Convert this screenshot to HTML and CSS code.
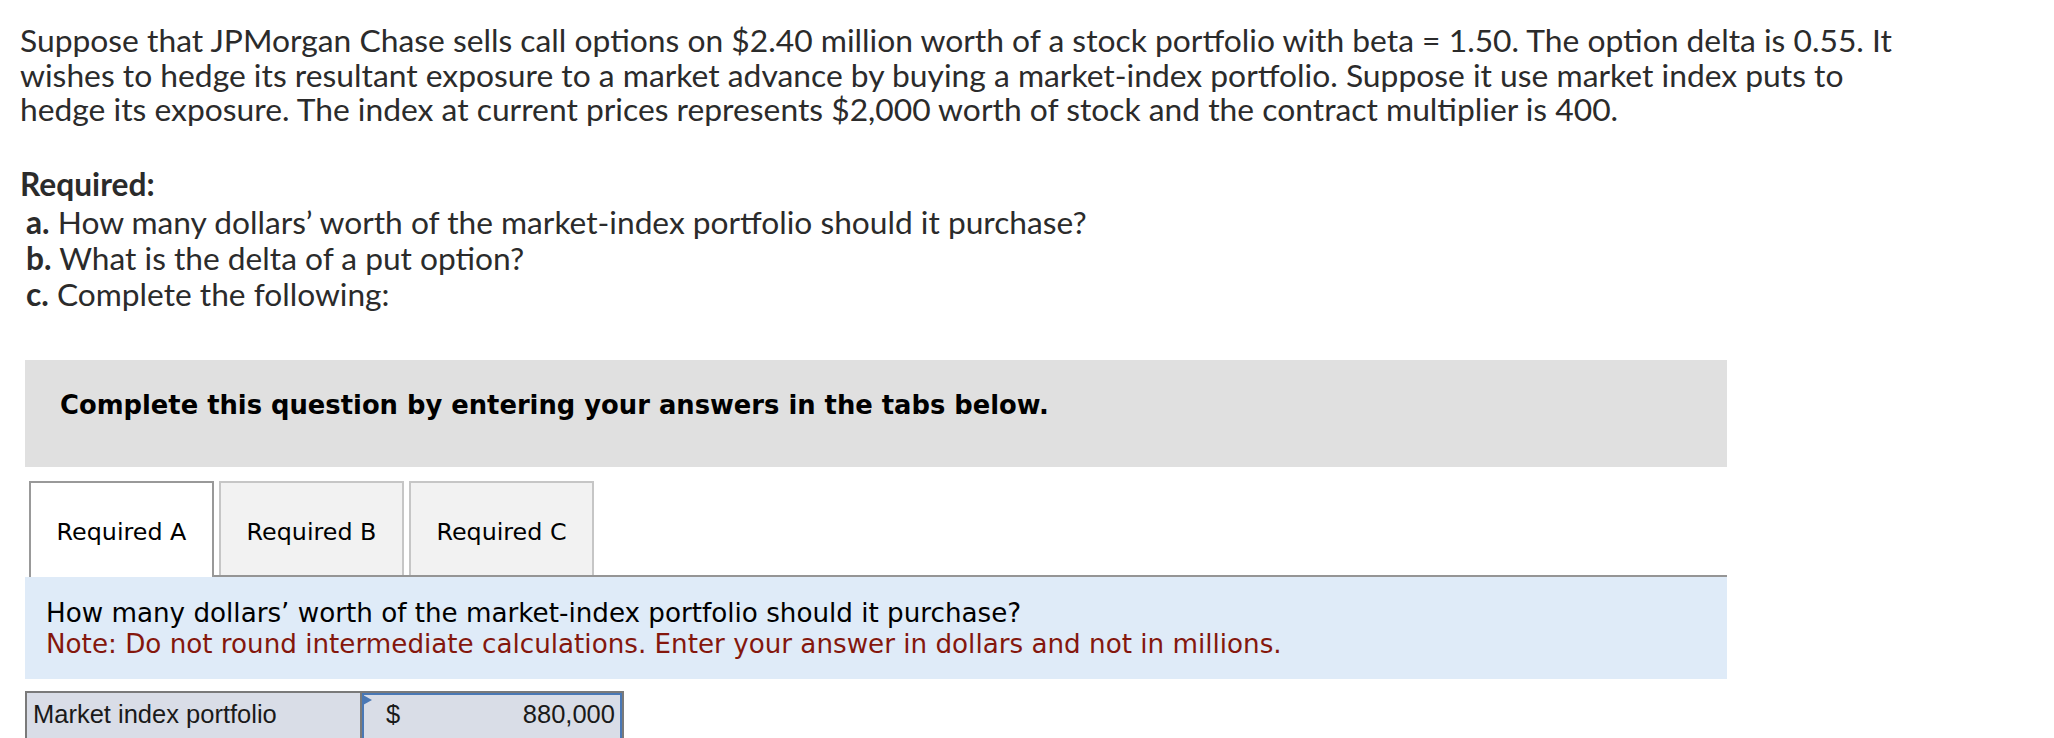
FILE: index.html
```html
<!DOCTYPE html>
<html lang="en">
<head>
<meta charset="utf-8">
<title>Question</title>
<link rel="stylesheet" href="styles.css">
</head>
<body>
<main class="page">
  <p class="prompt">Suppose that JPMorgan Chase sells call options on $2.40 million worth of a stock portfolio with beta = 1.50. The option delta is 0.55. It<br>wishes to hedge its resultant exposure to a market advance by buying a market-index portfolio. Suppose it use market index puts to<br>hedge its exposure. The index at current prices represents $2,000 worth of stock and the contract multiplier is 400.</p>

  <div class="required">
    <h2 class="req-title">Required:</h2>
    <ul class="req-list">
      <li><b>a.</b> How many dollars’ worth of the market-index portfolio should it purchase?</li>
      <li><b>b.</b> What is the delta of a put option?</li>
      <li><b>c.</b> Complete the following:</li>
    </ul>
  </div>

  <section class="quiz">
    <div class="instructions">
      <p>Complete this question by entering your answers in the tabs below.</p>
    </div>

    <div class="tabs" role="tablist">
      <div class="tab active" role="tab">Required A</div>
      <div class="tab" role="tab">Required B</div>
      <div class="tab" role="tab">Required C</div>
    </div>

    <div class="panel">
      <p>How many dollars’ worth of the market-index portfolio should it purchase?</p>
      <p class="note">Note: Do not round intermediate calculations. Enter your answer in dollars and not in millions.</p>
    </div>

    <div class="answer">
      <div class="label-cell">Market index portfolio</div>
      <div class="value-cell">
        <div class="input"><span class="cur">$</span><span class="num">880,000</span></div>
      </div>
    </div>
  </section>
</main>
</body>
</html>
```
FILE: styles.css
```css
html, body {
  margin: 0;
  padding: 0;
  background: #ffffff;
}

.page {
  padding: 0 0 0 20px;
}

.prompt {
  margin: 23px 0 0;
  font-family: Lato, "Open Sans", sans-serif;
  font-weight: 400;
  font-size: 31.8px;
  line-height: 34.5px;
  color: #2b2b2b;
  white-space: nowrap;
}

.required {
  margin-top: 39px;
  color: #2b2b2b;
  font-family: Lato, "Open Sans", sans-serif;
  white-space: nowrap;
}

.req-title {
  margin: 0;
  font-size: 31.7px;
  line-height: 36px;
  font-weight: 700;
}

.req-list {
  list-style: none;
  margin: 0;
  padding: 2.5px 0 0 6px;
  font-size: 31.7px;
  line-height: 36px;
  font-weight: 400;
}

.req-list b {
  font-weight: 700;
}

.quiz {
  margin: 48px 0 0 5px;
  width: 1702px;
}

.instructions {
  background: #e0e0e0;
  height: 107px;
  box-sizing: border-box;
  padding: 29.5px 0 0 35px;
}

.instructions p {
  margin: 0;
  font-family: "DejaVu Sans", Verdana, sans-serif;
  font-weight: 700;
  font-size: 25.8px;
  color: #000;
}

.tabs {
  display: flex;
  align-items: flex-end;
  gap: 5px;
  margin: 14px 0 0 4px;
  height: 94px;
  border-bottom: 2px solid #959595;
}

.tab {
  width: 185px;
  height: 94px;
  box-sizing: border-box;
  padding: 34.6px 0 0;
  border: 2px solid #c6c6c6;
  border-bottom: none;
  background: #f2f2f2;
  font-family: "DejaVu Sans", Verdana, sans-serif;
  font-size: 23.8px;
  font-weight: 400;
  line-height: normal;
  color: #000;
  text-align: center;
}

.tab.active {
  height: 96px;
  margin-bottom: -2px;
  background: #ffffff;
  border-color: #999999;
}

.panel {
  background: #dfebf8;
  padding: 20.75px 21px 19.25px;
  font-family: "DejaVu Sans", Verdana, sans-serif;
  font-size: 26.2px;
  line-height: 31px;
  color: #000;
}

.panel p {
  margin: 0;
}

.panel .note {
  color: #84170d;
}

.answer {
  display: flex;
  margin-top: 12px;
  font-family: "Liberation Sans", Arial, sans-serif;
  font-size: 25.5px;
  color: #1a1a1a;
}

.label-cell {
  width: 335px;
  box-sizing: border-box;
  border: 2px solid #7a7a7a;
  border-right: none;
  background: #d9dde7;
  padding: 7px 6px 12px;
}

.value-cell {
  width: 264px;
  box-sizing: border-box;
  border: 2px solid #7a7a7a;
  background: #d9dde7;
  display: flex;
}

.input {
  position: relative;
  flex: 1;
  border: 2px solid #4a78b5;
  display: flex;
  justify-content: space-between;
  padding: 4.9px 5px 0 22px;
}

.input::before {
  content: "";
  position: absolute;
  left: -1px;
  top: 0;
  width: 0;
  height: 0;
  border-left: 9px solid #4a78b5;
  border-top: 5.5px solid transparent;
  border-bottom: 5.5px solid transparent;
}
```
